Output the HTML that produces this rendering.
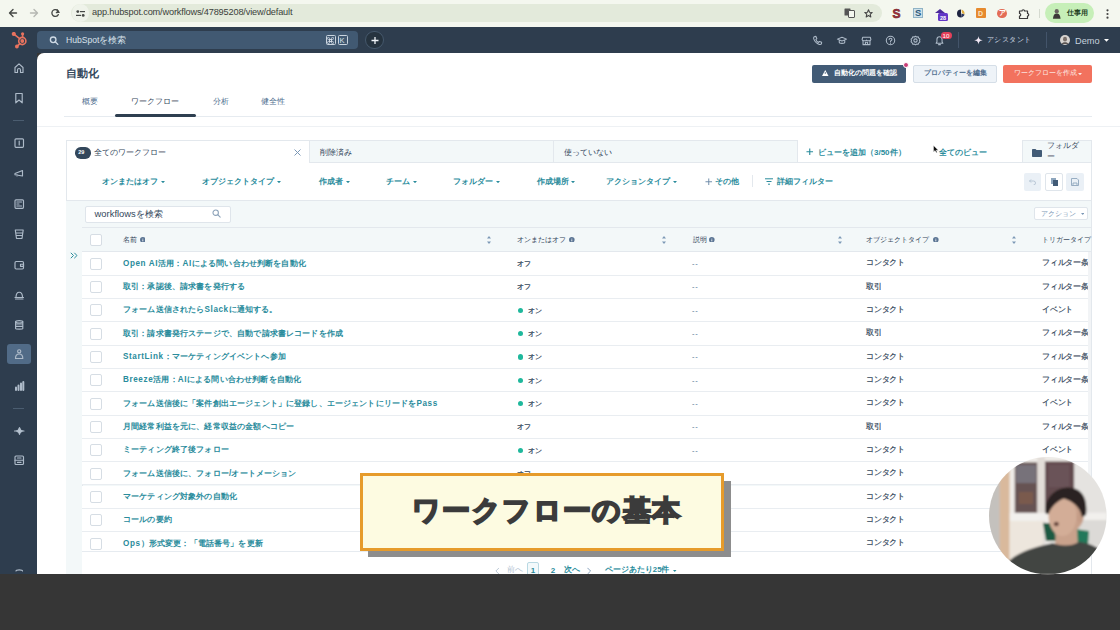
<!DOCTYPE html>
<html><head><meta charset="utf-8">
<style>
*{margin:0;padding:0;box-sizing:border-box}
html,body{width:1120px;height:630px;overflow:hidden;background:#363636;font-family:"Liberation Sans",sans-serif}
.a{position:absolute}
.txt{position:absolute;white-space:nowrap}
.row{position:absolute;left:82px;width:1009px;height:23.33px;border-bottom:1px solid #e9edf1;background:#fff}
.row span{position:absolute;white-space:nowrap}
.row .nm i{font-style:normal;letter-spacing:0.6px}
.cb{position:absolute;width:12px;height:12px;border:1px solid #d6dde4;border-radius:2px;background:#fff}
.row .cb{left:8.3px;top:5.5px}
.nm{left:41px;top:5.6px;font-size:8.15px;letter-spacing:0.15px;line-height:11px;font-weight:bold;color:#2a8c9c}
.st,.ds,.ob,.tg{top:5.8px;font-size:7px;line-height:11px;color:#33475b;-webkit-text-stroke:0.2px #33475b}
.ob,.tg{font-size:8px;top:5.3px;letter-spacing:-0.2px}
.dot{left:435.5px;top:8.9px;width:5.4px;height:5.4px;border-radius:50%;background:#1fb89c}
.ds{left:610px;font-size:7.5px;letter-spacing:0.8px;color:#516f90;-webkit-text-stroke:0}
.ob{left:784px}
.tg{left:960px}
</style></head><body>

<!-- chrome bar -->
<div class="a" style="left:0;top:0;width:1120px;height:27px;background:#f4f7ef"></div>
<div class="a" style="left:71px;top:3.6px;width:811px;height:18.6px;border-radius:9.3px;background:#e3eadb"></div>
<div class="a" style="left:71.5px;top:4.2px;width:17px;height:17.4px;border-radius:9px;background:#eff3ea"></div>
<div class="txt" style="left:92px;top:6.3px;font-size:9.2px;line-height:12.2px;color:#3a3e3a;letter-spacing:-0.16px">app.hubspot.com/workflows/47895208/view/default</div>
<svg class="a" style="left:8px;top:7px" width="10" height="12" viewBox="0 0 10 12" fill="none" stroke="#474a47" stroke-width="1.4" stroke-linecap="round" stroke-linejoin="round"><path d="M8.5 6H1.8M5 2.5L1.5 6L5 9.5"/></svg>
<svg class="a" style="left:28.5px;top:7px" width="10" height="12" viewBox="0 0 10 12" fill="none" stroke="#b5b8b3" stroke-width="1.4" stroke-linecap="round" stroke-linejoin="round"><path d="M1.5 6H8.2M5 2.5L8.5 6L5 9.5"/></svg>
<svg class="a" style="left:50.5px;top:9.3px" width="9" height="8" viewBox="0 0 9 8" fill="none" stroke="#474a47" stroke-width="1.3" stroke-linecap="round"><path d="M7.6 3.2A3.4 3.4 0 1 0 7.3 5.6"/><path d="M6.2 0.8L7.9 3.3L5.4 3.6" fill="#474a47"/></svg>
<svg class="a" style="left:75.5px;top:9.8px" width="9" height="7" viewBox="0 0 9 7" fill="#474a47"><circle cx="1.8" cy="1.6" r="1.4"/><rect x="4" y="1" width="5" height="1.2"/><rect x="0" y="4.8" width="5" height="1.2"/><circle cx="7.2" cy="5.4" r="1.4"/></svg>
<!-- translate + star -->
<svg class="a" style="left:844px;top:8px" width="11" height="10" viewBox="0 0 11 10"><rect x="0.5" y="0.5" width="6" height="7" fill="#555" rx="0.5"/><rect x="4.5" y="2.5" width="6" height="7" fill="#f4f7ef" stroke="#555" stroke-width="1" rx="0.5"/></svg>
<svg class="a" style="left:863.5px;top:8.8px" width="9" height="9" viewBox="0 0 12 12" fill="none" stroke="#444" stroke-width="1.4" stroke-linejoin="round"><path d="M6 1L7.4 4.3L11 4.6L8.3 7L9.1 10.6L6 8.7L2.9 10.6L3.7 7L1 4.6L4.6 4.3Z"/></svg>
<div class="txt" style="left:892.5px;top:6.5px;font-size:12px;line-height:14px;font-weight:bold;color:#a8303c;-webkit-text-stroke:0.6px #6e1f28">S</div>
<div class="a" style="left:913px;top:8.2px;width:10px;height:9.5px;background:#cfe2ea;border:1px solid #8fb3c6"></div>
<div class="txt" style="left:915px;top:7px;font-size:9.5px;line-height:11px;font-weight:bold;color:#2d5a7a">S</div>
<svg class="a" style="left:934px;top:7.5px" width="14" height="13" viewBox="0 0 14 13"><path d="M1 5L6 1L11 5Z" fill="#4a2a9a"/><rect x="4" y="5" width="10" height="8" rx="1.5" fill="#6236c7"/><text x="9" y="11.5" font-size="5.5" fill="#fff" text-anchor="middle" font-family="Liberation Sans" font-weight="bold">28</text></svg>
<svg class="a" style="left:955.5px;top:8.8px" width="10" height="9" viewBox="0 0 10 9"><path d="M5 0.5A4 4 0 0 0 5 8.5Z" fill="#1e2440"/><path d="M5.5 0.5C7.5 1 9 3 8.5 5.5L6 4Z" fill="#e2b040"/><path d="M5 8.5C6.5 8.3 8 7.3 8.5 5.5L5.5 4.5Z" fill="#2b355c"/></svg>
<div class="a" style="left:976px;top:8px;width:10px;height:10px;background:#e68a2e;border-radius:1px"></div>
<div class="txt" style="left:978px;top:8.5px;font-size:7px;line-height:9px;color:#fbe3c0;font-weight:bold">D</div>
<div class="a" style="left:997.4px;top:8.5px;width:9.8px;height:9.5px;background:#e36c56;border-radius:50%"></div>
<div class="txt" style="left:999px;top:8px;font-size:7px;line-height:10px;color:#fff;font-weight:bold">ア</div>
<svg class="a" style="left:1017.5px;top:7.5px" width="12" height="12" viewBox="0 0 12 12" fill="none" stroke="#3b3b3b" stroke-width="1.2" stroke-linejoin="round"><path d="M1.5 3H4A1.2 1.2 0 0 1 6.5 3H9.5V5.5A1.2 1.2 0 0 1 9.5 8V10.5H1.5V8A1.2 1.2 0 0 0 1.5 5.5Z"/></svg>
<div class="a" style="left:1038.5px;top:8.5px;width:1px;height:9px;background:#d5dad0"></div>
<div class="a" style="left:1045px;top:3px;width:49px;height:19.8px;border-radius:10px;background:#c6efb8"></div>
<svg class="a" style="left:1052px;top:7.5px" width="9.5" height="11" viewBox="0 0 10 11"><ellipse cx="5" cy="3" rx="2.2" ry="2.3" fill="#6a6260"/><path d="M1 11C1.5 6.5 3 5.5 5 5.5C7 5.5 8.5 6.5 9 11Z" fill="#3d3838"/></svg>
<div class="txt" style="left:1066.5px;top:8.3px;font-size:7px;line-height:10px;color:#24401f;font-weight:bold;">仕事用</div>
<svg class="a" style="left:1105.5px;top:8.5px" width="3" height="10" viewBox="0 0 3 10" fill="#444"><circle cx="1.5" cy="1.3" r="1.1"/><circle cx="1.5" cy="5" r="1.1"/><circle cx="1.5" cy="8.7" r="1.1"/></svg>

<!-- hubspot nav -->
<div class="a" style="left:0;top:27px;width:1120px;height:26px;background:#2e3d4e"></div>
<div class="a" style="left:0;top:27px;width:37px;height:547px;background:#2e3d4e"></div>
<svg class="a" style="left:11px;top:32px" width="18" height="18" viewBox="0 0 18 18" fill="none" stroke="#e8735f" stroke-width="1.6" stroke-linecap="round"><circle cx="11.3" cy="9" r="3.6"/><circle cx="11.3" cy="9" r="1.1" fill="#e8735f"/><path d="M9 6.8L3.2 2.3M11.6 5.4V2.2M8.8 11.6L6.3 14.1"/><circle cx="2.8" cy="2" r="1.3" fill="#e8735f"/><circle cx="11.6" cy="1.8" r="0.8" fill="#e8735f"/><circle cx="5.9" cy="14.5" r="1.1" fill="#e8735f"/></svg>
<div class="a" style="left:37.4px;top:31.2px;width:321px;height:17.8px;border-radius:4px;background:#415972"></div>
<svg class="a" style="left:48.5px;top:35.5px" width="10.5" height="9" viewBox="0 0 11 10" fill="none" stroke="#cfdae5" stroke-width="1.5" stroke-linecap="round"><circle cx="4.3" cy="4.2" r="3.1"/><path d="M6.6 6.5L9.5 9.3"/></svg>
<div class="txt" style="left:66px;top:34.5px;font-size:8.6px;line-height:11.6px;color:#d8e1ea;">HubSpotを検索</div>
<div class="a" style="left:325.5px;top:35px;width:10.5px;height:10px;border:1px solid #c9d4df;border-radius:1.5px"></div>
<svg class="a" style="left:327.3px;top:36.8px" width="7" height="7" viewBox="0 0 10 10" fill="none" stroke="#d8e1ea" stroke-width="1.1"><path d="M3.5 3.5H6.5V6.5H3.5Z M3.5 3.5V2A1.5 1.5 0 1 0 2 3.5H8A1.5 1.5 0 1 0 6.5 2V8A1.5 1.5 0 1 0 8 6.5H2A1.5 1.5 0 1 0 3.5 8Z"/></svg>
<div class="a" style="left:337.5px;top:35px;width:10.5px;height:10px;border:1px solid #c9d4df;border-radius:1.5px"></div>
<div class="txt" style="left:339.6px;top:35.6px;font-size:7.5px;line-height:9px;color:#d8e1ea">K</div>
<div class="a" style="left:365.2px;top:30.6px;width:18.8px;height:18.8px;border-radius:50%;border:1px solid #45586c;background:#26333f"></div>
<svg class="a" style="left:370.5px;top:35.5px" width="8" height="9" viewBox="0 0 8 8" stroke="#f0f4f8" stroke-width="1.3"><path d="M4 0.5V7.5M0.5 4H7.5"/></svg>
<svg class="a" style="left:812.2px;top:34.5px" width="11" height="11" viewBox="0 0 12 12" fill="none" stroke="#aebbc9" stroke-width="1.15" stroke-linejoin="round" stroke-linecap="round"><path d="M2.5 1.8L4.3 1.5L5.3 4L4.2 5C4.8 6.5 5.8 7.5 7.2 8.1L8.2 7L10.5 8L10.3 9.8C9.8 10.3 9 10.5 8 10.3C5 9.3 2.8 7 1.8 4C1.7 3 1.9 2.3 2.5 1.8Z"/></svg><svg class="a" style="left:835.8px;top:34.8px" width="12" height="11" viewBox="0 0 12 12" fill="none" stroke="#aebbc9" stroke-width="1.15" stroke-linejoin="round" stroke-linecap="round"><path d="M1 4.5L6 2.5L11 4.5L6 6.5Z M3 5.5V8C3 9.5 9 9.5 9 8V5.5"/></svg><svg class="a" style="left:861.0px;top:34.5px" width="11" height="11" viewBox="0 0 12 12" fill="none" stroke="#aebbc9" stroke-width="1.15" stroke-linejoin="round" stroke-linecap="round"><path d="M1.8 2.5H10.2L10.8 5C10.8 6 9.8 6.3 9 6.3C8 6.3 6 6.3 6 5.5C6 6.3 4 6.3 3 6.3C2.2 6.3 1.2 6 1.2 5Z M2.2 6V10.5H9.8V6 M4.8 10.5V8H7.2V10.5"/></svg><svg class="a" style="left:885.3px;top:34.5px" width="11" height="11" viewBox="0 0 12 12" fill="none" stroke="#aebbc9" stroke-width="1.15" stroke-linejoin="round" stroke-linecap="round"><circle cx="6" cy="6" r="4.6"/><path d="M4.5 4.8C4.5 3.2 7.6 3.2 7.6 4.8C7.6 6 6 6 6 7.2M6 8.8V8.9"/></svg><svg class="a" style="left:910.0px;top:34.5px" width="11" height="11" viewBox="0 0 12 12" fill="none" stroke="#aebbc9" stroke-width="1.15" stroke-linejoin="round" stroke-linecap="round"><circle cx="6" cy="6" r="1.8"/><path d="M6 1.3L7.3 2.2L8.9 2L9.6 3.5L10.8 4.6L10.4 6.1L10.8 7.6L9.6 8.6L8.9 10.1L7.3 9.9L6 10.8L4.7 9.9L3.1 10.1L2.4 8.6L1.2 7.6L1.6 6.1L1.2 4.6L2.4 3.5L3.1 2L4.7 2.2Z"/></svg><svg class="a" style="left:934.0px;top:35.0px" width="11" height="11" viewBox="0 0 12 12" fill="none" stroke="#aebbc9" stroke-width="1.15" stroke-linejoin="round" stroke-linecap="round"><path d="M2.3 9H9.7L8.8 7.5V5C8.8 3.2 7.5 2 6 2C4.5 2 3.2 3.2 3.2 5V7.5Z M5 10.5H7"/></svg>
<div class="a" style="left:940.5px;top:32.3px;width:11.6px;height:7.2px;border-radius:3.6px;background:#e4405a"></div>
<div class="txt" style="left:942.5px;top:32.4px;font-size:6.2px;line-height:9.2px;color:#ffffff;line-height:7px">10</div>
<div class="a" style="left:958.3px;top:32px;width:1px;height:16px;background:#43546a"></div>
<svg class="a" style="left:973.5px;top:36.3px" width="9" height="8.5" viewBox="0 0 10 10" fill="#f3e9f5"><path d="M5 0C5.5 3.5 6.5 4.5 10 5C6.5 5.5 5.5 6.5 5 10C4.5 6.5 3.5 5.5 0 5C3.5 4.5 4.5 3.5 5 0Z"/></svg>
<div class="txt" style="left:987.1px;top:35.2px;font-size:7.4px;line-height:10.4px;color:#d0dae4;letter-spacing:0.4px">アシスタント</div>
<div class="a" style="left:1046px;top:32px;width:1px;height:16px;background:#43546a"></div>
<svg class="a" style="left:1060px;top:35px" width="10" height="10" viewBox="0 0 10 10"><circle cx="5" cy="5" r="5" fill="#d8d4d0"/><ellipse cx="5" cy="4.2" rx="2" ry="2.4" fill="#7a706a"/><path d="M1.5 9C2.5 6.5 7.5 6.5 8.5 9Z" fill="#5a5350"/></svg>
<div class="txt" style="left:1075px;top:34.5px;font-size:9.2px;line-height:12.2px;color:#c6d2de;">Demo</div>
<svg class="a" style="left:1103.6px;top:39.1px" width="5" height="2.75" viewBox="0 0 10 5.5"><path d="M0 0H10L5 5.5Z" fill="#ffffff"/></svg>

<!-- left sidebar icons -->
<svg class="a" style="left:12.5px;top:62.2px" width="12" height="12" viewBox="0 0 12 12" fill="none" stroke="#aebbc9" stroke-width="1.15" stroke-linejoin="round" stroke-linecap="round"><path d="M2 10.5V5.5L6 1.8L10 5.5V10.5H7.5V8A1.5 1.5 0 0 0 4.5 8V10.5Z"/></svg><svg class="a" style="left:12.5px;top:91.8px" width="12" height="12" viewBox="0 0 12 12" fill="none" stroke="#aebbc9" stroke-width="1.15" stroke-linejoin="round" stroke-linecap="round"><path d="M2.8 1.5H9.2V10.8L6 8L2.8 10.8Z"/></svg><div class="a" style="left:12.5px;top:120px;width:11.5px;height:1px;background:#4b5d70"></div><svg class="a" style="left:12.5px;top:137.0px" width="12" height="12" viewBox="0 0 12 12" fill="none" stroke="#aebbc9" stroke-width="1.15" stroke-linejoin="round" stroke-linecap="round"><rect x="2" y="1.8" width="8.5" height="8.5" rx="1"/><path d="M6.2 4V8"/></svg><svg class="a" style="left:12.5px;top:167.0px" width="12" height="12" viewBox="0 0 12 12" fill="none" stroke="#aebbc9" stroke-width="1.15" stroke-linejoin="round" stroke-linecap="round"><path d="M2 6.5L9.5 3.5V9L2 7.8Z M4 7.5V9"/></svg><svg class="a" style="left:12.5px;top:198.0px" width="12" height="12" viewBox="0 0 12 12" fill="none" stroke="#aebbc9" stroke-width="1.15" stroke-linejoin="round" stroke-linecap="round"><rect x="2" y="1.8" width="8.5" height="8.5" rx="1"/><path d="M3.8 4H8.6M3.8 6H6M3.8 8H8.6"/></svg><svg class="a" style="left:12.5px;top:227.5px" width="12" height="12" viewBox="0 0 12 12" fill="none" stroke="#aebbc9" stroke-width="1.15" stroke-linejoin="round" stroke-linecap="round"><path d="M2.3 2H10.2L9 10.5H3.5Z M3 5H9.5M3.3 7.5H9"/></svg><svg class="a" style="left:12.5px;top:259.0px" width="12" height="12" viewBox="0 0 12 12" fill="none" stroke="#aebbc9" stroke-width="1.15" stroke-linejoin="round" stroke-linecap="round"><rect x="2" y="2.5" width="8.5" height="7.5" rx="1.2"/><path d="M7.5 5.2H10.5V7.3H7.5Z"/></svg><svg class="a" style="left:12.5px;top:289.2px" width="12" height="12" viewBox="0 0 12 12" fill="none" stroke="#aebbc9" stroke-width="1.15" stroke-linejoin="round" stroke-linecap="round"><path d="M2 8.5H10.5M3 8.5C3 5 4.5 3.2 6.2 3.2C8 3.2 9.5 5 9.5 8.5M2.5 10H10"/></svg><svg class="a" style="left:12.5px;top:318.6px" width="12" height="12" viewBox="0 0 12 12" fill="none" stroke="#aebbc9" stroke-width="1.15" stroke-linejoin="round" stroke-linecap="round"><ellipse cx="6.2" cy="2.8" rx="3.6" ry="1.2"/><path d="M2.6 2.8V9.5C2.6 10.3 9.8 10.3 9.8 9.5V2.8M2.6 5H9.8M2.6 7.3H9.8"/></svg><div class="a" style="left:7px;top:343.6px;width:23.5px;height:20.2px;border-radius:3px;background:#516b87"></div><svg class="a" style="left:12.5px;top:348.0px" width="12" height="12" viewBox="0 0 12 12" fill="none" stroke="#aebbc9" stroke-width="1.15" stroke-linejoin="round" stroke-linecap="round"><circle cx="6.2" cy="3.3" r="1.6"/><path d="M2.5 10.5C2.5 7.3 4 6 6.2 6C8.4 6 9.8 7.3 9.8 10.5Z"/></svg><svg class="a" style="left:12.5px;top:380.0px" width="12" height="12" viewBox="0 0 12 12" fill="none" stroke="#aebbc9" stroke-width="1.15" stroke-linejoin="round" stroke-linecap="round"><path d="M3 10V7.5M5.5 10V5.5M8 10V3.5M10.3 10V2" stroke-width="2"/></svg><div class="a" style="left:12.5px;top:408px;width:11.5px;height:1px;background:#4b5d70"></div><svg class="a" style="left:12.5px;top:424.5px" width="12" height="12" viewBox="0 0 12 12" fill="none" stroke="#aebbc9" stroke-width="1.15" stroke-linejoin="round" stroke-linecap="round"><path d="M1.5 6H11 M6.5 2.5C7 5 8 5.8 10.5 6C8 6.2 7 7 6.5 9.5C6 7 5 6.2 2.5 6C5 5.8 6 5 6.5 2.5Z" fill="#c3cfdb"/></svg><svg class="a" style="left:12.5px;top:454.2px" width="12" height="12" viewBox="0 0 12 12" fill="none" stroke="#aebbc9" stroke-width="1.15" stroke-linejoin="round" stroke-linecap="round"><rect x="2" y="2" width="8.5" height="8.5" rx="1"/><path d="M2 6.2H10.5M4.5 4H8M4.5 8.4H8"/></svg><svg class="a" style="left:12.5px;top:568.0px" width="12" height="12" viewBox="0 0 12 12" fill="none" stroke="#aebbc9" stroke-width="1.15" stroke-linejoin="round" stroke-linecap="round"><path d="M3 3C3 1.5 9.5 1.5 9.5 3"/></svg>

<!-- main panel -->
<div class="a" style="left:37px;top:53px;width:1083px;height:521px;background:#fff;border-top-left-radius:7px"></div>

<!-- header -->
<div class="txt" style="left:66px;top:66.2px;font-size:11.3px;line-height:14.3px;color:#33475b;font-weight:bold;">自動化</div>
<div class="txt" style="left:81.5px;top:96.2px;font-size:8px;line-height:11px;color:#516f90;">概要</div>
<div class="txt" style="left:131px;top:96.2px;font-size:8px;line-height:11px;color:#33475b;">ワークフロー</div>
<div class="txt" style="left:213px;top:96.2px;font-size:8px;line-height:11px;color:#516f90;">分析</div>
<div class="txt" style="left:261px;top:96.2px;font-size:8px;line-height:11px;color:#516f90;">健全性</div>
<div class="a" style="left:64px;top:115.5px;width:1028px;height:1px;background:#e6ebf0"></div>
<div class="a" style="left:114.5px;top:114.4px;width:81px;height:3px;background:#2e3f50;border-radius:1.5px"></div>
<div class="a" style="left:37px;top:126.2px;width:1083px;height:1px;background:#eef1f4"></div>

<!-- buttons -->
<div class="a" style="left:812px;top:64.8px;width:94.3px;height:17.8px;background:#425b76;border-radius:2px"></div>
<svg class="a" style="left:822px;top:70.3px" width="6.5" height="6" viewBox="0 0 10 9"><path d="M5 0L10 9H0Z" fill="#fff"/><path d="M5 3V6" stroke="#425b76" stroke-width="1.2"/></svg>
<div class="txt" style="left:834px;top:68.3px;font-size:7px;line-height:10px;color:#ffffff;font-weight:bold;">自動化の問題を確認</div>
<div class="a" style="left:903.2px;top:61.8px;width:6px;height:6px;background:#c93d77;border-radius:50%;border:1px solid #fff"></div>
<div class="a" style="left:913px;top:64.8px;width:83.5px;height:17.8px;background:#eef3f8;border:1px solid #d5dee7;border-radius:2px"></div>
<div class="txt" style="left:924.3px;top:68.3px;font-size:7px;line-height:10px;color:#516f90;font-weight:bold;">プロパティーを編集</div>
<div class="a" style="left:1003.4px;top:64.8px;width:88.6px;height:17.8px;background:#f2725e;border-radius:2px"></div>
<div class="txt" style="left:1014px;top:68.3px;font-size:7px;line-height:10px;color:#fde9e4;">ワークフローを作成</div>
<svg class="a" style="left:1078px;top:73.2px" width="4" height="2.20" viewBox="0 0 10 5.5"><path d="M0 0H10L5 5.5Z" fill="#fde9e4"/></svg>

<!-- card frame -->
<div class="a" style="left:65.5px;top:140px;width:1026px;height:434px;border:1px solid #e3e8ed;border-top:none;border-bottom:none;background:#fff"></div>
<div class="a" style="left:65.5px;top:139.5px;width:244px;height:1px;background:#e3e8ed"></div>
<div class="a" style="left:309px;top:139.5px;width:245px;height:23.5px;background:#f3f8f9;border:1px solid #e3e8ed"></div>
<div class="a" style="left:553px;top:139.5px;width:245px;height:23.5px;background:#f3f8f9;border:1px solid #e3e8ed"></div>
<div class="a" style="left:1022px;top:139.5px;width:69.5px;height:23.5px;background:#f3f8f9;border:1px solid #e3e8ed"></div>
<div class="a" style="left:798px;top:162.2px;width:224px;height:1px;background:#e3e8ed"></div>
<div class="a" style="left:75px;top:147.4px;width:15.6px;height:11.3px;border-radius:5.7px;background:#33475b"></div>
<div class="txt" style="left:78.3px;top:149.3px;font-size:5.5px;line-height:8.5px;color:#ffffff;font-weight:bold;line-height:7px">29</div>
<div class="txt" style="left:93.8px;top:147px;font-size:8px;line-height:11px;color:#33475b;">全てのワークフロー</div>
<svg class="a" style="left:293.5px;top:148.5px" width="7" height="7" viewBox="0 0 7 7" stroke="#7c98b6" stroke-width="1"><path d="M0.5 0.5L6.5 6.5M6.5 0.5L0.5 6.5"/></svg>
<div class="txt" style="left:320px;top:147px;font-size:8px;line-height:11px;color:#33475b;">削除済み</div>
<div class="txt" style="left:563.6px;top:147px;font-size:8px;line-height:11px;color:#33475b;">使っていない</div>
<svg class="a" style="left:806px;top:147.5px" width="7.5" height="7.5" viewBox="0 0 8 8" stroke="#2a8c9c" stroke-width="1.2"><path d="M4 0.5V7.5M0.5 4H7.5"/></svg>
<div class="txt" style="left:818px;top:146.5px;font-size:8px;line-height:11px;color:#2a8c9c;font-weight:bold;">ビューを追加（3/50件）</div>
<div class="txt" style="left:938.6px;top:146.5px;font-size:8px;line-height:11px;color:#2a8c9c;font-weight:bold;">全てのビュー</div>
<svg class="a" style="left:932.5px;top:145px" width="6" height="8" viewBox="0 0 6 8"><path d="M0.5 0.5V7L2 5.6L3.3 7.8L4.2 7.3L3.1 5.2H5.3Z" fill="#111" stroke="#fff" stroke-width="0.4"/></svg>
<div class="txt" style="left:1047px;top:139.6px;font-size:8px;line-height:11px;color:#33475b;">フォルダ</div>
<div class="txt" style="left:1047px;top:151.2px;font-size:8px;line-height:11px;color:#33475b;">ー</div>
<svg class="a" style="left:1031.5px;top:148.5px" width="10" height="8" viewBox="0 0 10 8"><path d="M0 1C0 0.5 0.3 0 1 0H3.5L4.5 1H9C9.6 1 10 1.4 10 2V7C10 7.6 9.6 8 9 8H1C0.4 8 0 7.6 0 7Z" fill="#425b76"/></svg>

<!-- filters -->
<div class="txt" style="left:102px;top:176.3px;font-size:8px;line-height:11px;color:#2a8c9c;font-weight:bold;">オンまたはオフ</div><svg class="a" style="left:161px;top:181px" width="4" height="2.20" viewBox="0 0 10 5.5"><path d="M0 0H10L5 5.5Z" fill="#2a8c9c"/></svg>
<div class="txt" style="left:202px;top:176.3px;font-size:8px;line-height:11px;color:#2a8c9c;font-weight:bold;">オブジェクトタイプ</div><svg class="a" style="left:277px;top:181px" width="4" height="2.20" viewBox="0 0 10 5.5"><path d="M0 0H10L5 5.5Z" fill="#2a8c9c"/></svg>
<div class="txt" style="left:319px;top:176.3px;font-size:8px;line-height:11px;color:#2a8c9c;font-weight:bold;">作成者</div><svg class="a" style="left:346px;top:181px" width="4" height="2.20" viewBox="0 0 10 5.5"><path d="M0 0H10L5 5.5Z" fill="#2a8c9c"/></svg>
<div class="txt" style="left:386px;top:176.3px;font-size:8px;line-height:11px;color:#2a8c9c;font-weight:bold;">チーム</div><svg class="a" style="left:413px;top:181px" width="4" height="2.20" viewBox="0 0 10 5.5"><path d="M0 0H10L5 5.5Z" fill="#2a8c9c"/></svg>
<div class="txt" style="left:453px;top:176.3px;font-size:8px;line-height:11px;color:#2a8c9c;font-weight:bold;">フォルダー</div><svg class="a" style="left:496px;top:181px" width="4" height="2.20" viewBox="0 0 10 5.5"><path d="M0 0H10L5 5.5Z" fill="#2a8c9c"/></svg>
<div class="txt" style="left:537px;top:176.3px;font-size:8px;line-height:11px;color:#2a8c9c;font-weight:bold;">作成場所</div><svg class="a" style="left:571px;top:181px" width="4" height="2.20" viewBox="0 0 10 5.5"><path d="M0 0H10L5 5.5Z" fill="#2a8c9c"/></svg>
<div class="txt" style="left:605.7px;top:176.3px;font-size:8px;line-height:11px;color:#2a8c9c;font-weight:bold;">アクションタイプ</div><svg class="a" style="left:673px;top:181px" width="4" height="2.20" viewBox="0 0 10 5.5"><path d="M0 0H10L5 5.5Z" fill="#2a8c9c"/></svg>
<svg class="a" style="left:705px;top:178px" width="7.5" height="7.5" viewBox="0 0 8 8" stroke="#6b8aa8" stroke-width="1"><path d="M4 0.5V7.5M0.5 4H7.5"/></svg>
<div class="txt" style="left:715px;top:176.3px;font-size:8px;line-height:11px;color:#2a8c9c;font-weight:bold;">その他</div>
<div class="a" style="left:751.8px;top:175px;width:1px;height:12px;background:#e3e8ed"></div>
<svg class="a" style="left:764.6px;top:178px" width="8" height="7" viewBox="0 0 8 7" stroke="#2a8c9c" stroke-width="1"><path d="M0 0.8H8M1.5 3.5H6.5M3 6.2H5"/></svg>
<div class="txt" style="left:777px;top:176.3px;font-size:8px;line-height:11px;color:#2a8c9c;font-weight:bold;">詳細フィルター</div>
<div class="a" style="left:1024.3px;top:172.9px;width:17.2px;height:17.7px;background:#eaf0f6;border-radius:2px"></div>
<svg class="a" style="left:1029px;top:178.5px" width="7" height="6" viewBox="0 0 7 6" fill="none" stroke="#b3c2d1" stroke-width="0.9"><path d="M2 0.5L0.5 2L2 3.5M0.5 2H4.5A2 2 0 0 1 4.5 6"/></svg>
<div class="a" style="left:1045px;top:172.9px;width:18px;height:17.7px;background:#fff;border:1px solid #dfe5eb;border-radius:2px"></div>
<svg class="a" style="left:1050.5px;top:177.5px" width="7" height="8" viewBox="0 0 7 8"><rect x="0" y="0" width="5" height="6" fill="#8ea6bd"/><rect x="2" y="2" width="5" height="6" fill="#425b76"/></svg>
<div class="a" style="left:1066.3px;top:172.9px;width:18px;height:17.7px;background:#eaf0f6;border-radius:2px"></div>
<svg class="a" style="left:1071px;top:177.5px" width="8" height="8" viewBox="0 0 8 8" fill="none" stroke="#8ea6bd" stroke-width="0.9"><path d="M0.5 0.5H6L7.5 2V7.5H0.5Z M2 7.5V5H6V7.5"/></svg>

<!-- gray table container -->
<div class="a" style="left:66px;top:200px;width:1025px;height:374px;background:#f3f8f9;border-top:1px solid #e3e8ed"></div>
<div class="a" style="left:81.5px;top:226.5px;width:1px;height:348px;background:#e3e8ed"></div>
<div class="a" style="left:84.5px;top:205.6px;width:146px;height:17px;background:#fff;border:1px solid #dfe5eb;border-radius:2px"></div>
<div class="txt" style="left:94.6px;top:207.8px;font-size:9.4px;line-height:12.4px;color:#33475b;">workflowsを検索</div>
<svg class="a" style="left:211.5px;top:209px" width="9" height="9" viewBox="0 0 11 11" fill="none" stroke="#8aa1b8" stroke-width="1.3" stroke-linecap="round"><circle cx="4.5" cy="4.5" r="3.3"/><path d="M7 7L10 10"/></svg>
<div class="a" style="left:1033.7px;top:207px;width:54.3px;height:13px;background:#fff;border:1px solid #dfe5eb;border-radius:2px"></div>
<div class="txt" style="left:1041px;top:209.2px;font-size:7px;line-height:10px;color:#7c98b6;">アクション</div>
<svg class="a" style="left:1080.5px;top:213px" width="3.5" height="1.93" viewBox="0 0 10 5.5"><path d="M0 0H10L5 5.5Z" fill="#7c98b6"/></svg>
<svg class="a" style="left:70px;top:252px" width="8" height="7" viewBox="0 0 8 7" fill="none" stroke="#2a8c9c" stroke-width="1"><path d="M0.8 0.8L3.5 3.5L0.8 6.2M4.3 0.8L7 3.5L4.3 6.2"/></svg>

<!-- table white area below rows -->
<div class="a" style="left:82px;top:551px;width:1009px;height:23px;background:#fff"></div>

<!-- table header -->
<div class="a" style="left:82px;top:226.5px;width:1009px;height:25.3px;background:#f3f8f9;border-top:1px solid #e3e8ed;border-bottom:1px solid #e3e8ed"></div>
<div class="cb" style="left:90.3px;top:234.3px"></div>
<div class="txt" style="left:123px;top:234.8px;font-size:7px;line-height:10px;color:#33475b;">名前</div>
<div class="txt" style="left:517px;top:234.8px;font-size:7px;line-height:10px;color:#33475b;">オンまたはオフ</div>
<div class="txt" style="left:692.5px;top:234.8px;font-size:7px;line-height:10px;color:#33475b;">説明</div>
<div class="txt" style="left:866px;top:234.8px;font-size:7px;line-height:10px;color:#33475b;">オブジェクトタイプ</div>
<div class="txt" style="left:1042px;top:234.8px;font-size:7px;line-height:10px;color:#33475b;">トリガータイプ</div>
<svg class="a" style="left:139.8px;top:236.6px" width="5.6" height="5.6" viewBox="0 0 10 10"><circle cx="5" cy="5" r="5" fill="#5b7594"/><path d="M5 4.3V7.8M5 2.2V2.8" stroke="#fff" stroke-width="1.5"/></svg><svg class="a" style="left:569.2px;top:236.6px" width="5.6" height="5.6" viewBox="0 0 10 10"><circle cx="5" cy="5" r="5" fill="#5b7594"/><path d="M5 4.3V7.8M5 2.2V2.8" stroke="#fff" stroke-width="1.5"/></svg><svg class="a" style="left:709.2px;top:236.6px" width="5.6" height="5.6" viewBox="0 0 10 10"><circle cx="5" cy="5" r="5" fill="#5b7594"/><path d="M5 4.3V7.8M5 2.2V2.8" stroke="#fff" stroke-width="1.5"/></svg><svg class="a" style="left:933px;top:236.6px" width="5.6" height="5.6" viewBox="0 0 10 10"><circle cx="5" cy="5" r="5" fill="#5b7594"/><path d="M5 4.3V7.8M5 2.2V2.8" stroke="#fff" stroke-width="1.5"/></svg><svg class="a" style="left:487.3px;top:235.5px" width="4" height="8" viewBox="0 0 4 8" fill="#7c98b6"><path d="M2 0L4 2.5H0Z M2 8L4 5.5H0Z"/></svg><svg class="a" style="left:662.4px;top:235.5px" width="4" height="8" viewBox="0 0 4 8" fill="#7c98b6"><path d="M2 0L4 2.5H0Z M2 8L4 5.5H0Z"/></svg><svg class="a" style="left:837.5px;top:235.5px" width="4" height="8" viewBox="0 0 4 8" fill="#7c98b6"><path d="M2 0L4 2.5H0Z M2 8L4 5.5H0Z"/></svg><svg class="a" style="left:1012px;top:235.5px" width="4" height="8" viewBox="0 0 4 8" fill="#7c98b6"><path d="M2 0L4 2.5H0Z M2 8L4 5.5H0Z"/></svg>
<div class="a" style="left:0;top:0;width:1088px;height:551.3px;overflow:hidden">
<div class="row" style="top:252.20px"><span class="cb"></span><span class="nm"><i>Open AI</i>活用：<i>AI</i>による問い合わせ判断を自動化</span><span class="st" style="left:435px">オフ</span><span class="ds">--</span><span class="ob">コンタクト</span><span class="tg">フィルター条</span></div>
<div class="row" style="top:275.53px"><span class="cb"></span><span class="nm">取引：承認後、請求書を発行する</span><span class="st" style="left:435px">オフ</span><span class="ds">--</span><span class="ob">取引</span><span class="tg">フィルター条</span></div>
<div class="row" style="top:298.86px"><span class="cb"></span><span class="nm">フォーム送信されたら<i>Slack</i>に通知する。</span><span class="dot"></span><span class="st" style="left:446px">オン</span><span class="ds">--</span><span class="ob">コンタクト</span><span class="tg">イベント</span></div>
<div class="row" style="top:322.19px"><span class="cb"></span><span class="nm">取引：請求書発行ステージで、自動で請求書レコードを作成</span><span class="dot"></span><span class="st" style="left:446px">オン</span><span class="ds">--</span><span class="ob">取引</span><span class="tg">フィルター条</span></div>
<div class="row" style="top:345.52px"><span class="cb"></span><span class="nm"><i>StartLink</i>：マーケティングイベントへ参加</span><span class="dot"></span><span class="st" style="left:446px">オン</span><span class="ds">--</span><span class="ob">コンタクト</span><span class="tg">フィルター条</span></div>
<div class="row" style="top:368.85px"><span class="cb"></span><span class="nm"><i>Breeze</i>活用：<i>AI</i>による問い合わせ判断を自動化</span><span class="dot"></span><span class="st" style="left:446px">オン</span><span class="ds">--</span><span class="ob">コンタクト</span><span class="tg">フィルター条</span></div>
<div class="row" style="top:392.18px"><span class="cb"></span><span class="nm">フォーム送信後に「案件創出エージェント」に登録し、エージェントにリードを<i>Pass</i></span><span class="dot"></span><span class="st" style="left:446px">オン</span><span class="ds">--</span><span class="ob">コンタクト</span><span class="tg">イベント</span></div>
<div class="row" style="top:415.51px"><span class="cb"></span><span class="nm">月間経常利益を元に、経常収益の金額へコピー</span><span class="st" style="left:435px">オフ</span><span class="ds">--</span><span class="ob">取引</span><span class="tg">フィルター条</span></div>
<div class="row" style="top:438.84px"><span class="cb"></span><span class="nm">ミーティング終了後フォロー</span><span class="dot"></span><span class="st" style="left:446px">オン</span><span class="ds">--</span><span class="ob">コンタクト</span><span class="tg">イベント</span></div>
<div class="row" style="top:462.17px"><span class="cb"></span><span class="nm">フォーム送信後に、フォロー/オートメーション</span><span class="st" style="left:435px">オフ</span><span class="ds">--</span><span class="ob">コンタクト</span><span class="tg"></span></div>
<div class="row" style="top:485.50px"><span class="cb"></span><span class="nm">マーケティング対象外の自動化</span><span class="st" style="left:435px">オフ</span><span class="ds">--</span><span class="ob">コンタクト</span><span class="tg"></span></div>
<div class="row" style="top:508.83px"><span class="cb"></span><span class="nm">コールの要約</span><span class="st" style="left:435px">オフ</span><span class="ds">--</span><span class="ob">コンタクト</span><span class="tg"></span></div>
<div class="row" style="top:532.16px"><span class="cb"></span><span class="nm"><i>Ops</i>）形式変更：「電話番号」を更新</span><span class="st" style="left:435px">オフ</span><span class="ds">--</span><span class="ob">コンタクト</span><span class="tg"></span></div>
</div>
<div class="a" style="left:82px;top:550.6px;width:1006px;height:1px;background:#e6ebf0"></div>
<div class="a" style="left:1088px;top:252px;width:3px;height:299px;background:#f2f4f6"></div>

<!-- pagination -->
<svg class="a" style="left:494.5px;top:566.5px" width="4.5" height="8" viewBox="0 0 5 8" fill="none" stroke="#b3c2d1" stroke-width="1"><path d="M4.5 0.5L1 4L4.5 7.5"/></svg>
<div class="txt" style="left:506.5px;top:565.2px;font-size:7.8px;line-height:10.8px;color:#b0c1d1;">前へ</div>
<div class="a" style="left:527.2px;top:562px;width:11.8px;height:14px;border:1px solid #b9d9e3;background:#f3f9fb;border-radius:2px"></div>
<div class="txt" style="left:530.8px;top:565.2px;font-size:8px;line-height:11px;color:#2a8c9c;font-weight:bold;">1</div>
<div class="txt" style="left:550.7px;top:565.2px;font-size:8px;line-height:11px;color:#2a8c9c;font-weight:bold;">2</div>
<div class="txt" style="left:563.5px;top:565.2px;font-size:7.8px;line-height:10.8px;color:#2a8c9c;font-weight:bold;">次へ</div>
<svg class="a" style="left:586.5px;top:566.5px" width="4.5" height="8" viewBox="0 0 5 8" fill="none" stroke="#7c98b6" stroke-width="1"><path d="M0.5 0.5L4 4L0.5 7.5"/></svg>
<div class="txt" style="left:604.8px;top:565.2px;font-size:7.8px;line-height:10.8px;color:#2a8c9c;font-weight:bold;">ページあたり25件</div>
<svg class="a" style="left:673px;top:570px" width="3.5" height="1.93" viewBox="0 0 10 5.5"><path d="M0 0H10L5 5.5Z" fill="#2a8c9c"/></svg>

<!-- bottom band -->
<div class="a" style="left:0;top:573.6px;width:1120px;height:57px;background:#363636"></div>

<!-- banner -->
<div class="a" style="left:367.5px;top:480.5px;width:363px;height:76.5px;background:#8d8d8d"></div>
<div class="a" style="left:359.5px;top:472.5px;width:364px;height:78.5px;background:#fdfbe1;border:3px solid #e69b2b"></div>
<div class="txt" style="left:412px;top:492px;font-size:28px;line-height:31px;color:#3b3b3b;font-weight:bold;line-height:38px;letter-spacing:1.4px;-webkit-text-stroke:2px #3b3b3b">ワークフローの基本</div>

<!-- avatar -->
<svg class="a" style="left:989.4px;top:456.7px" width="118" height="118" viewBox="0 0 118 118">
<defs><clipPath id="cc"><circle cx="58.8" cy="58.8" r="58.8"/></clipPath>
<filter id="bl" x="-10%" y="-10%" width="120%" height="120%"><feGaussianBlur stdDeviation="1.3"/></filter></defs>
<g clip-path="url(#cc)"><g filter="url(#bl)">
<rect x="-5" y="-5" width="128" height="128" fill="#e9e6e2"/>
<rect x="-5" y="0" width="16" height="118" fill="#c4c1bd"/>
<rect x="10.7" y="10" width="10" height="108" fill="#d9b99c"/>
<rect x="20.8" y="0" width="65" height="118" fill="#efece8"/>
<rect x="25.8" y="5.4" width="22.6" height="51.4" fill="#665253"/>
<rect x="27" y="8" width="20" height="18" fill="#77727a"/>
<rect x="30" y="35" width="14" height="12" fill="#7a5a4e"/>
<rect x="48.4" y="0" width="7.6" height="118" fill="#e2ddd8"/>
<rect x="56" y="4.4" width="29.3" height="51.4" fill="#644c4f"/>
<rect x="60" y="8" width="20" height="22" fill="#6a5258"/>
<rect x="85.3" y="-5" width="40" height="128" fill="#e5e3e0"/>
<rect x="20.8" y="55.8" width="97" height="8" fill="#f2f0ed"/>
<rect x="20.8" y="64" width="33" height="40" fill="#ede6dd"/>
<rect x="88" y="63" width="30" height="25" fill="#dcdad7"/>
<path d="M54 66 L64 66 L68 84 L57 84 Z" fill="#1d5a42"/>
<path d="M86 72 L100 74 L99 88 L88 88 Z" fill="#24785a"/>
<path d="M67 70 L88 70 L89 90 L66 90 Z" fill="#c9a28c"/>
<path d="M14 118 L20 104 C 28 96, 44 90, 64 86 C 70 89, 82 90, 90 85 C 100 86, 108 90, 116 95 L 122 118 Z" fill="#434442"/>
<ellipse cx="80" cy="57" rx="15" ry="18" fill="#c8a18b"/>
<ellipse cx="73.5" cy="59" rx="14" ry="20" fill="#d3ad97"/>
<ellipse cx="91" cy="60" rx="3.2" ry="5.5" fill="#c49c86"/>
<path d="M57 57 C 54 40, 68 30, 80 30.5 C 93 31, 99 41, 97 58 L 93 60 C 91 50, 85 45, 75 41.5 C 68 44, 62 50, 59.5 57 Z" fill="#2a2320"/>
<ellipse cx="67.3" cy="67" rx="2.6" ry="2.2" fill="#6a4a40"/>
</g></g>
</svg>

</body></html>
